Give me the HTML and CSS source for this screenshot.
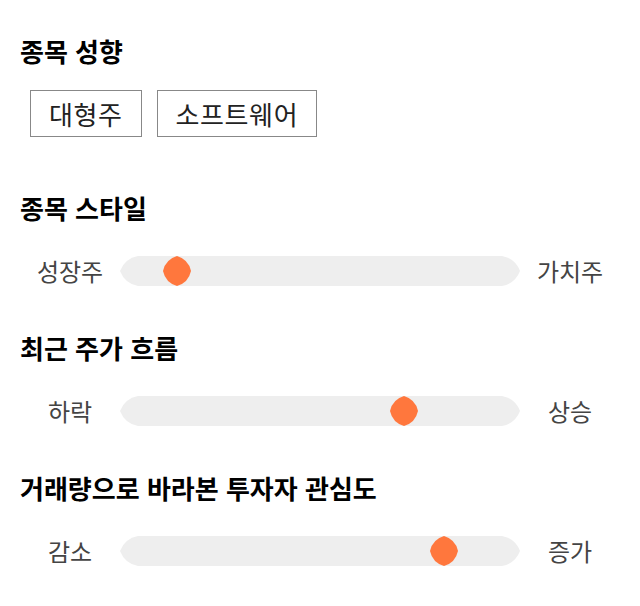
FILE: index.html
```html
<!DOCTYPE html>
<html lang="ko">
  <head>
    <meta charset="UTF-8" />
    <meta name="viewport" content="width=device-width, initial-scale=1.0" />
    <title>종목 분석</title>
    <link rel="stylesheet" href="styles.css">
  </head>

  <body>
    <div class="panel">
      <section class="group">
        <h2 class="group-title">종목 성향</h2>
        <div class="tags">
          <span class="tag">대형주</span>
          <span class="tag">소프트웨어</span>
        </div>
      </section>

      <section class="group">
        <h2 class="group-title">종목 스타일</h2>
        <div class="scale">
          <span class="scale-label">성장주</span>
          <svg class="track" width="400" height="30" viewBox="0 0 400 30">
            <path class="track-bg" d="M18 0 H382 A24 24 0 0 1 400 15 A24 24 0 0 1 382 30 H18 A24 24 0 0 1 0 15 A24 24 0 0 1 18 0 Z" />
            <path class="thumb" transform="translate(42 0)" d="M15 0 A20 20 0 0 1 29 15 A20 20 0 0 1 15 30 A20 20 0 0 1 1 15 A20 20 0 0 1 15 0 Z" />
          </svg>
          <span class="scale-label">가치주</span>
        </div>
      </section>

      <section class="group">
        <h2 class="group-title">최근 주가 흐름</h2>
        <div class="scale">
          <span class="scale-label">하락</span>
          <svg class="track" width="400" height="30" viewBox="0 0 400 30">
            <path class="track-bg" d="M18 0 H382 A24 24 0 0 1 400 15 A24 24 0 0 1 382 30 H18 A24 24 0 0 1 0 15 A24 24 0 0 1 18 0 Z" />
            <path class="thumb" transform="translate(269 0)" d="M15 0 A20 20 0 0 1 29 15 A20 20 0 0 1 15 30 A20 20 0 0 1 1 15 A20 20 0 0 1 15 0 Z" />
          </svg>
          <span class="scale-label">상승</span>
        </div>
      </section>

      <section class="group">
        <h2 class="group-title">거래량으로 바라본 투자자 관심도</h2>
        <div class="scale">
          <span class="scale-label">감소</span>
          <svg class="track" width="400" height="30" viewBox="0 0 400 30">
            <path class="track-bg" d="M18 0 H382 A24 24 0 0 1 400 15 A24 24 0 0 1 382 30 H18 A24 24 0 0 1 0 15 A24 24 0 0 1 18 0 Z" />
            <path class="thumb" transform="translate(309 0)" d="M15 0 A20 20 0 0 1 29 15 A20 20 0 0 1 15 30 A20 20 0 0 1 1 15 A20 20 0 0 1 15 0 Z" />
          </svg>
          <span class="scale-label">증가</span>
        </div>
      </section>
    </div>
  </body>
</html>
```

FILE: styles.css
```css
body {
  margin: 0;
  background-color: #fff;
  font-family: "Noto Sans CJK KR", "Noto Sans", sans-serif;
  color: #000;
}

.panel {
  display: flex;
  flex-direction: column;
  gap: 47px;
  padding: 36px 20px 20px;
}

.group {
  display: flex;
  flex-direction: column;
}

.group-title {
  margin: 0;
  font-size: 26px;
  font-weight: bold;
  line-height: 30px;
}

.tags {
  display: flex;
  gap: 15px;
  margin: 24px 0 9px 10px;
}

.tag {
  height: 47px;
  box-sizing: border-box;
  padding: 0 18px;
  border: 1px solid #888;
  font-size: 26px;
  letter-spacing: 0.6px;
  line-height: 45px;
  color: #222;
}

.scale {
  display: flex;
  align-items: center;
  margin-top: 33px;
  height: 30px;
}

.scale-label {
  width: 100px;
  text-align: center;
  font-size: 24px;
  color: #444;
  line-height: 30px;
}

.track {
  display: block;
  flex: none;
}

.track-bg {
  fill: #eeeeee;
}

.thumb {
  fill: #ff773d;
}
```
